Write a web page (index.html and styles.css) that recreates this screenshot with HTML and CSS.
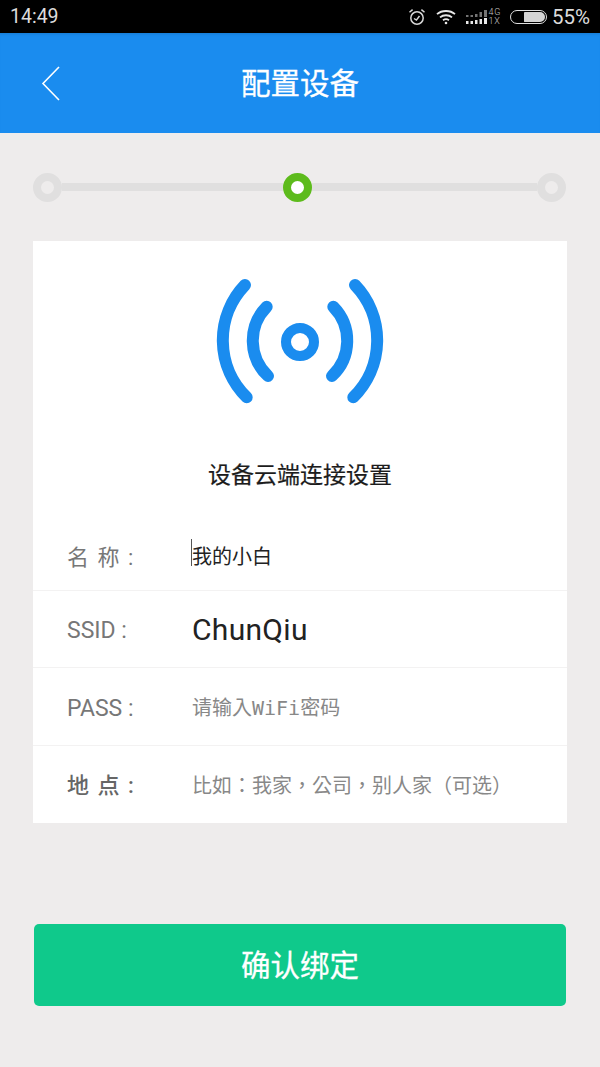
FILE: index.html
```html
<!DOCTYPE html>
<html lang="zh">
<head>
<meta charset="utf-8">
<title>配置设备</title>
<link rel="stylesheet" href="styles.css">
</head>
<body>
<div class="statusbar">
  <span class="time">14:49</span>
  <div class="status-right">
    <svg class="ic-alarm" width="18" height="18" viewBox="0 0 18 18" fill="none" stroke="#d8d8d8" stroke-width="1.5"><circle cx="9" cy="10" r="6.2"/><path d="M6 10.5l2.4 1.6L11.5 8"/><path d="M1.5 4.2L4.6 1.6M16.5 4.2L13.4 1.6"/></svg>
    <svg class="ic-wifi" width="20" height="16" viewBox="0 0 20 16" fill="none" stroke="#e8e8e8" stroke-width="1.8"><path d="M1 5.2C5.8.9 14.200.9 19 5.200"/><path d="M4 8.400c3.300-2.900 8.700-2.900 12 0"/><path d="M7 11.300c1.700-1.300 4.300-1.300 6 0"/><circle cx="10" cy="14" r="1.300" fill="#e8e8e8" stroke="none"/></svg>
    <svg class="ic-signal" width="22" height="16" viewBox="0 0 22 16" fill="#e8e8e8"><rect x="0" y="12" width="2.500" height="3"/><rect x="4.500" y="12" width="2.500" height="3"/><rect x="9" y="11" width="2.500" height="4"/><rect x="13.500" y="10" width="2.500" height="5"/><rect x="18" y="9" width="3" height="6"/><rect x="0" y="6" width="2.500" height="2" opacity=".5"/><rect x="4.500" y="6" width="2.500" height="2" opacity=".5"/><rect x="9" y="5" width="2.500" height="3" opacity=".5"/><rect x="13.500" y="3" width="2.500" height="5" opacity=".5"/><rect x="18" y="1" width="3" height="7" opacity=".5"/></svg>
    <span class="net"><span>4G</span><span>1X</span></span>
    <div class="battery"><div class="battery-fill"></div></div>
    <span class="percent">55%</span>
  </div>
</div>
<header class="appbar">
  <svg class="back" width="20" height="36" viewBox="0 0 20 36" fill="none" stroke="#fff" stroke-width="1.600"><path d="M18 1L2 17.500 18 34"/></svg>
  <h1 class="title">配置设备</h1>
</header>
<main class="content">
  <div class="stepper">
    <span class="step"></span>
    <span class="line line-left"></span>
    <span class="step step-active"></span>
    <span class="line line-right"></span>
    <span class="step"></span>
  </div>
  <section class="card">
    <div class="card-head">
      <svg class="signal" width="170" height="128" viewBox="0 0 170 128" fill="none" stroke="#1a8cef" stroke-width="12" stroke-linecap="round">
        <circle cx="85" cy="65" r="14" stroke-width="10"/>
        <path d="M51.700 29.700A48.500 48.500 0 0 0 53 99"/>
        <path d="M118.300 29.700A48.500 48.500 0 0 1 117 99"/>
        <path d="M30 8A80 80 0 0 0 31.700 120.300"/>
        <path d="M140 8A80 80 0 0 1 138.300 120.300"/>
      </svg>
      <h2 class="card-title">设备云端连接设置</h2>
    </div>
    <div class="row row-first">
      <span class="label label-spaced">名 称 :</span>
      <span class="value value-dark"><span class="caret"></span>我的小白</span>
    </div>
    <div class="row">
      <span class="label label-latin">SSID :</span>
      <span class="value value-big">ChunQiu</span>
    </div>
    <div class="row">
      <span class="label label-latin">PASS :</span>
      <span class="value value-hint" lang="zh-TW">请输入WiFi密码</span>
    </div>
    <div class="row">
      <span class="label label-spaced label-strong">地 点 :</span>
      <span class="value value-hint" lang="zh-TW">比如：我家，公司，别人家（可选）</span>
    </div>
  </section>
  <button class="confirm" type="button">确认绑定</button>
</main>
</body>
</html>
```
FILE: styles.css
```css
* { box-sizing: border-box; }
html, body { margin: 0; padding: 0; }
body {
  width: 600px;
  height: 1067px;
  overflow: hidden;
  background: #eeecec;
  font-family: "Roboto", "Noto Sans CJK SC", sans-serif;
}
.statusbar {
  height: 33px;
  background: #000;
  color: #dcdcdc;
  display: flex;
  align-items: center;
  justify-content: space-between;
  padding: 0 10px 0 10px;
}
.time { font-size: 19.500px; }
.status-right { display: flex; align-items: center; }
.ic-alarm { margin-right: 10px; }
.ic-wifi { margin-right: 10px; }
.ic-signal { margin-right: 1px; }
.net {
  display: flex;
  flex-direction: column;
  font-size: 9px;
  font-weight: 300;
  line-height: 9px;
  letter-spacing: .6px;
  margin-right: 9px;
  color: #c4c4c4;
}
.battery {
  width: 37px;
  height: 14px;
  border: 1.500px solid #e0e0e0;
  border-radius: 7px;
  padding: 1px;
  display: flex;
  justify-content: flex-end;
  margin-right: 5px;
}
.battery-fill { width: 21px; background: #d4d4d4; border-radius: 1px 6px 6px 1px; }
.percent { font-size: 20.500px; }
.appbar {
  height: 100px;
  padding-top: 3px;
  background: #1a8cef;
  box-shadow: inset 0 3px 3px -2px rgba(0, 0, 0, .12);
  display: flex;
  align-items: center;
  justify-content: center;
  position: relative;
}
.back { position: absolute; left: 41px; top: 33px; }
.title { margin: 0; color: #fff; font-size: 29.500px; font-weight: 400; -webkit-text-stroke: .3px #fff; line-height: 1; }
.content { padding: 40px 33px 0; }
.stepper { height: 28px; margin: 0 1px 40px 0; display: flex; align-items: center; }
.step {
  width: 29px;
  height: 29px;
  border-radius: 50%;
  border: 8px solid #e0dfdf;
  background: #eeecec;
  flex: none;
}
.step-active { border-color: #5dbb1c; background: #fff; }
.line { height: 8px; background: #e0dfdf; }
.line-left { flex: 221; }
.line-right { flex: 225; }
.card { background: #fff; }
.card-head { padding-top: 36px; display: flex; flex-direction: column; align-items: center; }
.signal { display: block; }
.card-title {
  margin: 55px 0 21px;
  font-size: 23px;
  line-height: 32px;
  font-weight: 400;
  -webkit-text-stroke: .2px #1c1c1c;
  color: #1c1c1c;
}
.row {
  height: 77.500px;
  display: flex;
  align-items: center;
  padding-left: 34px;
  border-bottom: 1px solid #f3f2f2;
}
.row-first { padding-top: 8px; }
.row:last-child { border-bottom: 0; }
.label { width: 125px; flex: none; color: #777; font-size: 21px; }
.label-spaced { font-size: 22px; letter-spacing: 1.500px; }
.label-latin { font-size: 23px; padding-top: 4px; }
.label-strong { color: #666; font-weight: 500; padding-bottom: 2px; }
.value { font-size: 20px; display: flex; align-items: center; position: relative; }
.value-dark { color: #222; }
.value-big { color: #222; font-size: 30px; letter-spacing: .3px; padding-top: 2px; }
.value-hint { color: #888; font-family: "DejaVu Sans Mono", "Noto Sans CJK TC", monospace; }
.caret {
  position: absolute;
  left: -1px;
  top: -2px;
  width: 1px;
  height: 27px;
  background: #555;
}
.confirm {
  display: block;
  width: 532px;
  height: 82px;
  margin: 101px 0 0 1px;
  padding: 0 0 4px;
  border: 0;
  border-radius: 5px;
  background: #0fc98b;
  color: #fff;
  font-family: inherit;
  font-size: 29.500px;
  font-weight: 400;
  -webkit-text-stroke: .3px #fff;
}
```
